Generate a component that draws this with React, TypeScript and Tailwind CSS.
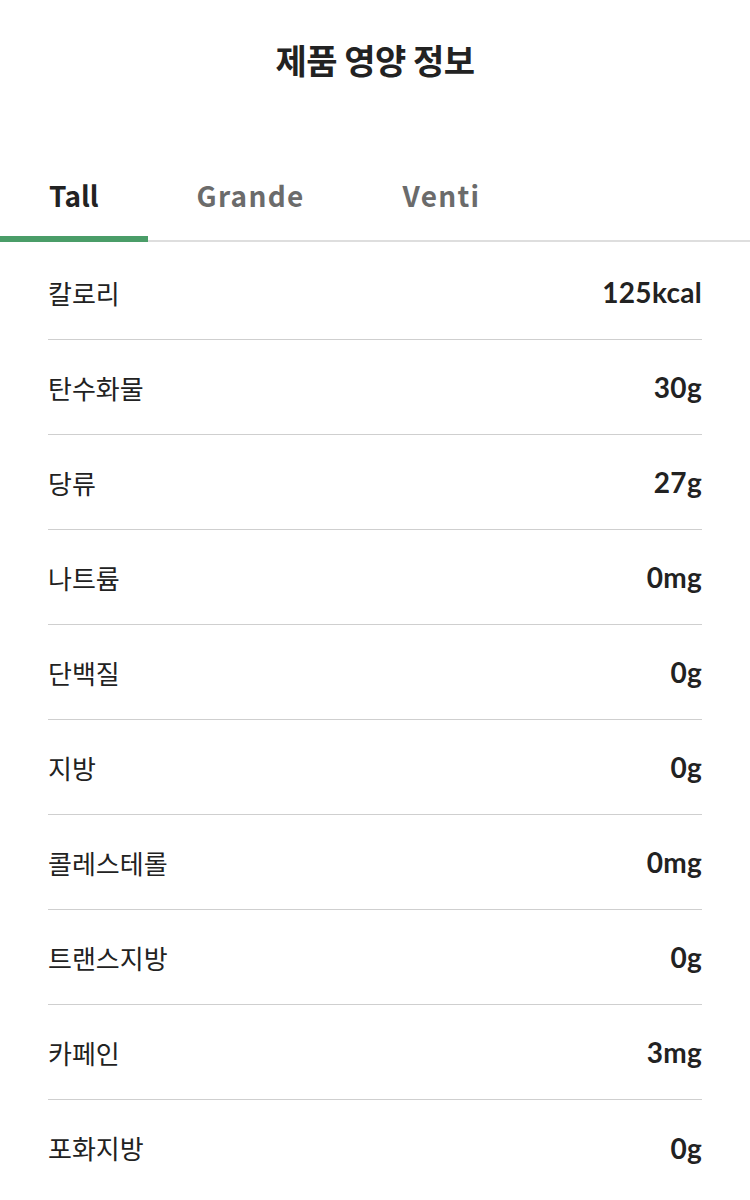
import React from 'react';

const rows: [string, string][] = [
  ['칼로리', '125kcal'],
  ['탄수화물', '30g'],
  ['당류', '27g'],
  ['나트륨', '0mg'],
  ['단백질', '0g'],
  ['지방', '0g'],
  ['콜레스테롤', '0mg'],
  ['트랜스지방', '0g'],
  ['카페인', '3mg'],
  ['포화지방', '0g'],
];

const tabs = ['Tall', 'Grande', 'Venti'];

export default function App() {
  return (
    <div
      className="w-[750px] min-h-[1200px] bg-white text-[#222]"
      style={{ fontFamily: '"Noto Sans CJK KR", "Noto Sans", sans-serif' }}
    >
      {/* Title */}
      <h1 className="pt-[35px] h-[152px] text-center text-[34px] font-semibold leading-[50px] tracking-[-0.5px]">
        제품 영양 정보
      </h1>

      {/* Size tabs */}
      <div className="flex border-b-2 border-[#dedede]">
        {tabs.map((t, i) => (
          <div
            key={t}
            className={
              i === 0
                ? 'px-[49px] h-[90px] flex items-center pt-[2px] text-[28px] font-bold text-[#222] border-b-[6px] border-[#4a9d68] -mb-[2px]'
                : 'px-[49px] h-[90px] flex items-center pt-[2px] text-[28px] font-bold tracking-[1.3px] text-[#6b6b6b] border-b-[6px] border-transparent -mb-[2px]'
            }
          >
            {t}
          </div>
        ))}
      </div>

      {/* Nutrition rows */}
      <div className="px-[48px] pt-[3px]">
        {rows.map(([label, value], i) => (
          <div
            key={label}
            className={
              i === rows.length - 1
                ? 'flex items-center justify-between h-[95px]'
                : 'flex items-center justify-between h-[95px] border-b border-[#cfcfcf]'
            }
          >
            <span className="text-[26px] text-[#222]">{label}</span>
            <span
              className="text-[28px] font-bold text-[#222] tracking-[0.3px]"
              style={{ fontFamily: 'Lato, "Noto Sans", sans-serif' }}
            >
              {value}
            </span>
          </div>
        ))}
      </div>
    </div>
  );
}
